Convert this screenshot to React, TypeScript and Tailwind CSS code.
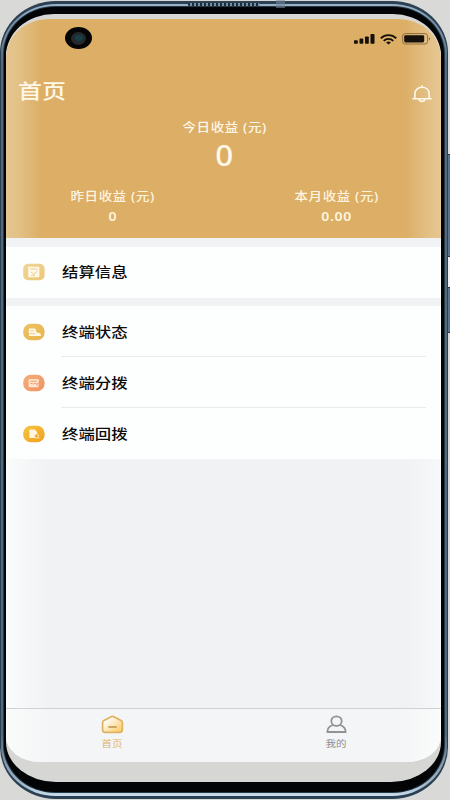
import type { ReactNode } from 'react'
import { clsx } from 'clsx'

const ROWS = [
  { label: '终端状态', kind: 'status' },
  { label: '终端分拨', kind: 'assign' },
  { label: '终端回拨', kind: 'recall' },
]

function Wide({ children, className }: { children: ReactNode; className?: string }) {
  return (
    <span className={clsx('inline-block whitespace-nowrap', className)}>{children}</span>
  )
}

function Stat({ label, value }: { label: string; value: string }) {
  return (
    <div className="flex w-[112px] flex-col items-center text-[#fff5df]">
      <Wide className="scale-x-[1.12] text-[12px] leading-[16px] font-medium tracking-[0.6px]">{label}</Wide>
      <Wide className="mt-[4px] scale-x-[1.12] text-[12.5px] leading-[16px] font-semibold tracking-[0.6px]">{value}</Wide>
    </div>
  )
}

function SignalIcon() {
  return (
    <svg width="21" height="10" viewBox="0 0 21 10" fill="#15110a">
      <rect x="0" y="6.3" width="3.8" height="3.5" rx="0.8" />
      <rect x="5.5" y="4.6" width="3.8" height="5.2" rx="0.8" />
      <rect x="11" y="2.4" width="3.8" height="7.4" rx="0.8" />
      <rect x="16.5" y="0" width="4" height="9.8" rx="0.8" />
    </svg>
  )
}

function WifiIcon() {
  return (
    <svg width="17" height="11" viewBox="0 0 17 11" fill="none" stroke="#15110a" strokeWidth="1.9">
      <path d="M0.8 4.2C5 0.1 12 0.1 16.2 4.2" />
      <path d="M3.7 6.9C6.4 4.2 10.6 4.2 13.3 6.9" />
      <path d="M6.2 8.4C7.5 7.2 9.5 7.2 10.8 8.4L8.5 10.6Z" fill="#15110a" stroke="none" />
    </svg>
  )
}

function BatteryIcon() {
  return (
    <svg width="29" height="12" viewBox="0 0 29 12">
      <rect x="0.6" y="0.6" width="25" height="10.4" rx="2.6" fill="none" stroke="#8c7040" strokeWidth="1" />
      <rect x="2.2" y="2.2" width="20" height="7.2" rx="1.4" fill="#15110a" />
      <path d="M27 4.2C28.6 4.8 28.6 6.8 27 7.4Z" fill="#8c7040" />
    </svg>
  )
}

function BellIcon() {
  return (
    <svg width="20" height="18" viewBox="0 0 20 18" fill="none" stroke="#fff8e8" strokeWidth="1.6" strokeLinecap="round">
      <path d="M10 0.9V2.2M2.9 13.5V8.7C2.9 4.9 5.9 2.3 10 2.3S17.1 4.9 17.1 8.7V13.5M0.9 13.7H19.1M7.1 14.2C7.5 17.3 12.5 17.3 12.9 14.2" />
    </svg>
  )
}

function RowIcon({ kind }: { kind: string }) {
  return (
    <svg width="24" height="18" viewBox="0 0 24 18" className="shrink-0">
      <defs>
        <linearGradient id={kind} x1="0" y1="0" x2="1" y2="1">
          <stop offset="0" stopColor={kind === 'settle' ? '#f1d497' : kind === 'assign' ? '#f6ad78' : kind === 'recall' ? '#f6c63d' : '#ecc267'} />
          <stop offset="1" stopColor={kind === 'settle' ? '#ebc777' : kind === 'assign' ? '#ee9464' : kind === 'recall' ? '#f09f1e' : '#e8b54c'} />
        </linearGradient>
      </defs>
      <rect x="1.2" y="0.8" width="21.4" height="16.4" rx={kind === 'settle' ? 5 : 7.5} fill={`url(#${kind})`} />
      {kind === 'settle' && (
        <>
          <rect x="6.2" y="3.8" width="11.2" height="10.4" rx="0.8" fill="#fff8e8" />
          <path d="M8 6H15.8M9 9L11.7 11.2L15.4 8.2M9 12.3H13" fill="none" stroke="#edc97f" strokeWidth="0.9" />
        </>
      )}
      {kind === 'status' && (
        <>
          <path d="M7 5.4H13.2L14.4 9.2L17.8 10.3Q19.6 11 18.8 13H7.2Q6.1 9 7 5.4Z" fill="#fff8e8" />
          <path d="M8.6 7.9H12M7.4 10.6H12.8L14 11.8" fill="none" stroke="#ecc26b" strokeWidth="0.8" />
        </>
      )}
      {kind === 'assign' && (
        <>
          <rect x="6.6" y="5" width="10.2" height="8.3" rx="1" fill="#ffe5ce" />
          <path d="M8.4 7.2H14.8M8.4 9.5H10.8M11.5 10.5L13 9L16.8 12.2M14.4 10.3L17.2 8.7" fill="none" stroke="#ee9464" strokeWidth="0.9" />
        </>
      )}
      {kind === 'recall' && (
        <>
          <path d="M7.4 4.5H12.6L15.1 6.7V13H7.4Z" fill="#fff6df" />
          <circle cx="14.5" cy="11" r="2" fill="#f1a82a" stroke="#fff0cb" strokeWidth="0.8" />
          <path d="M16 12.4L17.5 13.6" stroke="#fff0cb" />
        </>
      )}
    </svg>
  )
}

function MenuRow({ label, kind, className }: { label: string; kind: string; className?: string }) {
  return (
    <div className={clsx('flex items-center pl-[15.5px]', className)}>
      <RowIcon kind={kind} />
      <Wide className="ml-[16.5px] origin-left scale-x-[1.17] text-[14px] leading-[20px] font-medium text-[#0c0c0c]">{label}</Wide>
    </div>
  )
}

function Screen() {
  return (
    <div className="flex h-[743px] w-[435px] flex-col overflow-hidden rounded-t-[42px_38px] rounded-b-[34px_26px] bg-[#f1f2f4]">
      <header className="h-[219px] bg-[linear-gradient(90deg,#e5c68f_0,#e3c187_12px,#dcae66_36px,#dcae66_398px,#e3c188_424px,#e6c793_435px)]">
        <div className="flex h-[56px] items-start pt-[8px] pl-[59px]">
          <div className="flex h-[22px] w-[27px] items-center justify-center rounded-[50%] bg-[#050505]">
            <div className="flex h-[13px] w-[15px] items-center justify-center rounded-[50%] bg-[#24292d]">
              <div className="h-[6px] w-[8px] rounded-[50%] bg-[#174049]" />
            </div>
          </div>
          <div className="mt-[6px] ml-auto flex items-center pr-[10px]">
            <SignalIcon />
            <div className="w-[5px]" />
            <WifiIcon />
            <div className="w-[5px]" />
            <BatteryIcon />
          </div>
        </div>
        <div className="flex h-[32px] items-center justify-between pr-[9px] pl-[12px]">
          <Wide className="origin-left scale-x-[1.17] text-[20.5px] leading-[32px] font-medium text-[#fff8e8]">首页</Wide>
          <div className="pt-[6px]"><BellIcon /></div>
        </div>
        <div className="flex flex-col items-center pl-[1px] text-[#fff8e8]">
          <Wide className="mt-[13px] ml-[2px] scale-x-[1.12] text-[12px] leading-[16px] font-medium tracking-[0.6px]">今日收益 (元)</Wide>
          <Wide className="mt-[2px] scale-x-[1.08] text-[29px] leading-[34px] font-medium">0</Wide>
        </div>
        <div className="mt-[17px] flex justify-between pr-[48px] pl-[51px]">
          <Stat label="昨日收益 (元)" value="0" />
          <Stat label="本月收益 (元)" value="0.00" />
        </div>
      </header>

      <MenuRow label="结算信息" kind="settle" className="mt-[9px] h-[51px] bg-[#fdfefe] pb-px" />
      <div className="mt-[8px] bg-[#fdfefe]">
        {ROWS.map((row, i) => (
          <div key={row.kind}>
            <MenuRow label={row.label} kind={row.kind} className={i === 2 ? 'h-[51px]' : 'h-[50px] pt-px'} />
            {i < 2 && <div className="mr-[15px] ml-[55px] h-px bg-[#e9eaeb]" />}
          </div>
        ))}
      </div>
      <div className="flex-1 bg-[linear-gradient(90deg,#fafbfb_0,#f1f2f4_42px,#f1f2f4_400px,#f7f8f9_435px)]" />
      <nav className="flex h-[54px] border-t border-[#cfd1d3] bg-[linear-gradient(90deg,#fafbfb_0,#f4f5f6_45px,#f4f5f6_390px,#fafbfb_435px)] px-[49px] pt-[6px]">
        <div className="flex w-[114px] flex-col items-center text-[#dfb366]">
          <svg width="23" height="19" viewBox="0 0 23 19">
            <defs>
              <linearGradient id="home" x1="0" y1="0" x2="1" y2="1">
                <stop offset="0.25" stopColor="#fffaf0" />
                <stop offset="1" stopColor="#fbc756" />
              </linearGradient>
            </defs>
            <path d="M11.5 1.4C10.5 1.4 10 1.7 9.2 2.2L2.9 5.6C2 6.1 1.6 6.8 1.6 7.7V14.6C1.6 16.5 2.4 17.4 4.3 17.4H18.7C20.6 17.4 21.4 16.5 21.4 14.6V7.7C21.4 6.8 21 6.1 20.1 5.6L13.8 2.2C13 1.7 12.5 1.4 11.5 1.4Z" fill="url(#home)" stroke="#dfb163" strokeWidth="1.7" />
            <path d="M7.3 12H15.8" stroke="#bd944c" strokeWidth="1.3" />
          </svg>
          <Wide className="mt-[3px] scale-x-[1.16] text-[9px] leading-[14px]">首页</Wide>
        </div>
        <div className="ml-auto flex w-[112px] flex-col items-center text-[#8d8e90]">
          <svg width="21" height="19" viewBox="0 0 21 19" fill="none" stroke="#919294" strokeWidth="1.8">
            <ellipse cx="10.5" cy="6.1" rx="5.2" ry="4.8" />
            <path d="M6.8 10C3.2 11.3 1.3 13.7 1.3 17H19.7C19.7 13.7 17.8 11.3 14.2 10" strokeLinejoin="round" />
          </svg>
          <Wide className="mt-[3px] scale-x-[1.16] text-[9px] leading-[14px]">我的</Wide>
        </div>
      </nav>
    </div>
  )
}

export default function App() {
  return (
    <div className="relative h-[800px] w-[450px] overflow-hidden bg-[#d9d9d8] pt-px font-['Noto_Sans','Noto_Sans_CJK_SC',sans-serif]">
      <div className="absolute top-[154px] right-0 h-[103px] w-[3px] border-y border-[#23384b] bg-[#58748e]" />
      <div className="absolute top-[257px] right-0 h-[30px] w-[2px] bg-[#eeeff2]" />
      <div className="absolute top-[287px] right-0 h-[46px] w-[3px] border-y border-[#23384b] bg-[#58748e]" />
      <div className="relative h-[798px] w-[448px] rounded-[56px/52px] bg-[#2b4052] px-px pt-[3px] pb-[3px]">
        <div className="h-full rounded-[55px/50px] bg-[linear-gradient(180deg,#9ab3c8_0,#85a0b7_12px,#53687b_60px,#53687b_730px,#a3bacb_780px,#c9dceb_792px)] px-[2px] pt-[2px] pb-[3px]">
          <div className="h-full rounded-[52px/48px] bg-[#263746] px-px pt-px pb-px">
            <div className="h-full rounded-[51px/47px] bg-[#030405] pt-[7px] pr-[2px] pb-[10px] pl-[2px]">
              <div className="h-full w-[435px] overflow-hidden rounded-t-[48px_42px] rounded-b-[50px_40px] bg-[#d6d6d5] pt-[5px]">
                <Screen />
              </div>
            </div>
          </div>
        </div>
      </div>
      {/* earpiece grille */}
      <div className="absolute top-[3px] left-[188px] h-[3px] w-[72px] rounded-full bg-[repeating-linear-gradient(90deg,#1b2b39_0,#1b2b39_2px,#7791a7_2px,#7791a7_4px)]" />
      <div className="absolute top-0 left-[276px] h-[8px] w-[9px] bg-[#71859a]/60" />
    </div>
  )
}
